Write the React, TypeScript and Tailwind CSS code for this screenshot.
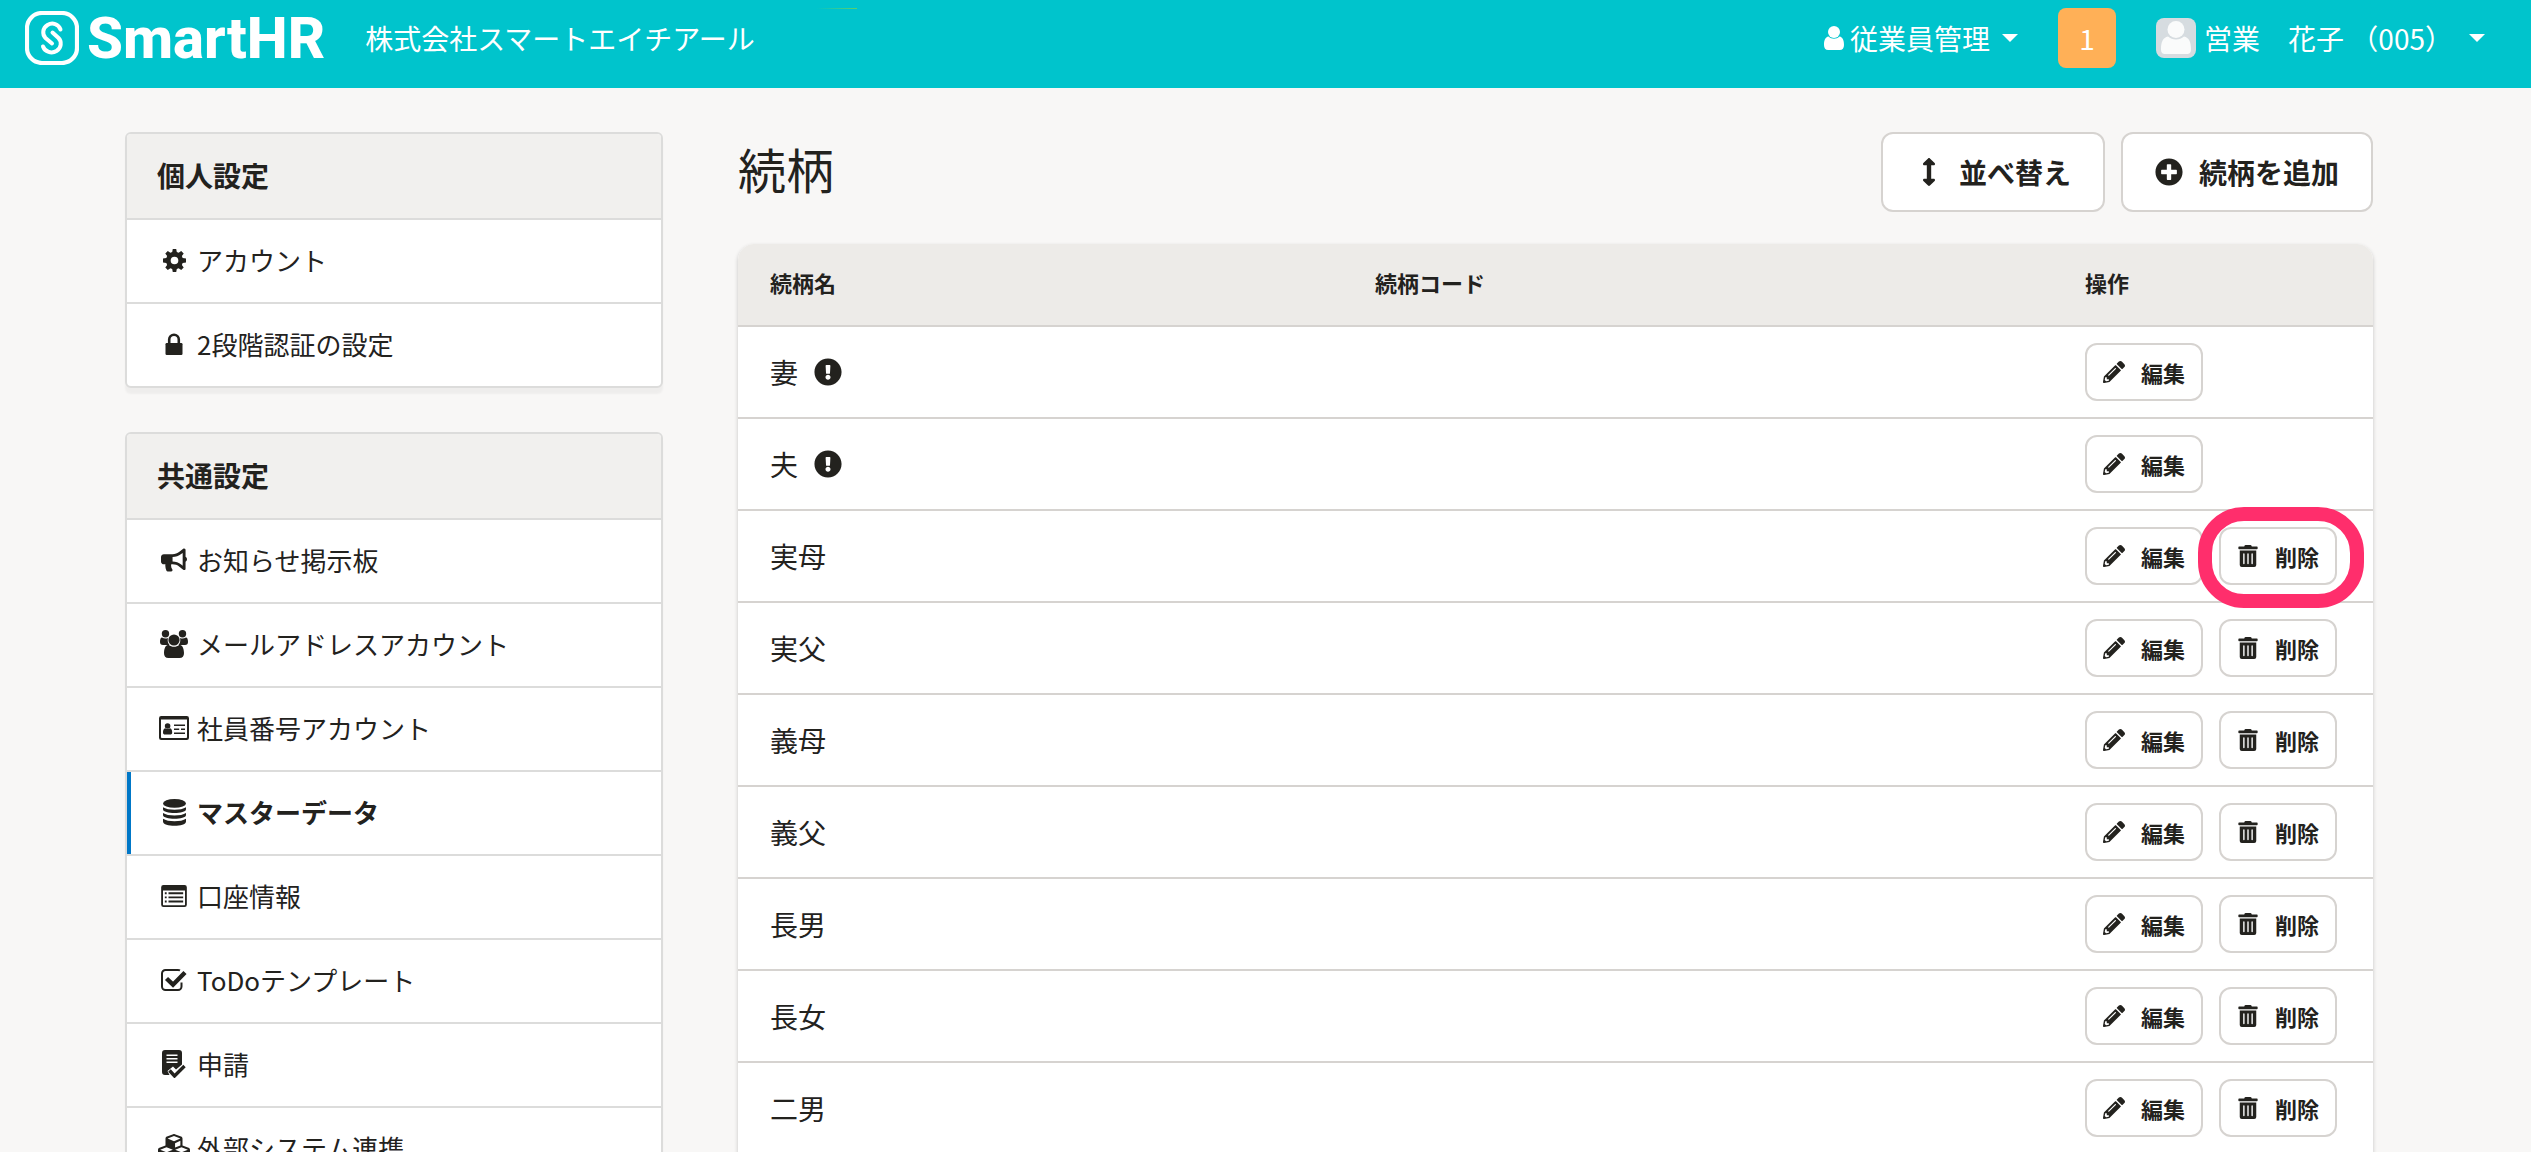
import React from "react";
import {
  FaArrowsAltV,
  FaBullhorn,
  FaCubes,
  FaExclamationCircle,
  FaPencilAlt,
  FaPlusCircle,
  FaTrashAlt,
} from "react-icons/fa";

type IconProps = { className?: string };

const GearIcon = ({ className }: IconProps) => (
  <svg viewBox="0 0 24 24" className={className} fill="currentColor" aria-hidden="true">
    <path
      fillRule="evenodd"
      d="M10.2 0h3.600l.6 3.200 1.900.8 2.700-1.900 2.600 2.600-1.900 2.700.8 1.900 3.500.7v4l-3.500.7-.8 1.900 1.900 2.700-2.600 2.600-2.700-1.900-1.900.8-.6 3.200h-3.600l-.6-3.200-1.900-.8-2.700 1.900-2.600-2.600 1.900-2.700-.8-1.900L0 14v-4l3.500-.7.8-1.900-1.900-2.700L5 2.100 7.700 4l1.900-.8zM12 8a4 4 0 1 0 0 8 4 4 0 0 0 0-8z"
    />
  </svg>
);

const LockIcon = ({ className }: IconProps) => (
  <svg viewBox="0 0 18 22" className={className} fill="currentColor" aria-hidden="true">
    <rect x="0.500" y="10" width="17" height="12" rx="1.200" />
    <path d="M4.200 11V6.500a4.800 4.800 0 0 1 9.600 0V11" fill="none" stroke="currentColor" strokeWidth="2.600" />
  </svg>
);

const UsersIcon = ({ className }: IconProps) => (
  <svg viewBox="0 0 28 28" className={className} fill="currentColor" aria-hidden="true">
    <circle cx="5.500" cy="3.700" r="3.700" />
    <circle cx="22.500" cy="3.700" r="3.700" />
    <path d="M2 7.500c2 1.300 4.500 1.300 6 .5-.8 3 0 5.200 1.500 7H3c-2 0-3-1-3-3 0-2.500.7-4.500 2-4.500zM26 7.500c-2 1.300-4.500 1.300-6 .5.8 3 0 5.200-1.500 7H25c2 0 3-1 3-3 0-2.500-.7-4.500-2-4.500z" />
    <circle cx="14" cy="10" r="5.600" />
    <path d="M8.700 14.800c-3 .3-4.500 3-4.700 8.200C3.900 26 5.500 28 8.500 28h11c3 0 4.600-2 4.500-5-.2-5.200-1.700-7.900-4.700-8.200-3 2.700-7.600 2.700-10.600 0z" />
  </svg>
);

const IdCardIcon = ({ className }: IconProps) => (
  <svg viewBox="0 0 30 24" className={className} fill="currentColor" aria-hidden="true">
    <path
      fillRule="evenodd"
      d="M2.200 0h25.600A2.200 2.200 0 0 1 30 2.200v19.600a2.200 2.200 0 0 1-2.200 2.200H2.200A2.200 2.200 0 0 1 0 21.800V2.200A2.200 2.200 0 0 1 2.200 0zM2 3.600v17.600a.8.8 0 0 0 .8.8h24.400a.8.8 0 0 0 .8-.8V3.600z"
    />
    <circle cx="8.600" cy="10" r="2.800" />
    <path d="M6.200 12.200C4.600 12.600 4 14.500 4 16.500 4 18 4.800 18.600 6 18.600h5.200c1.200 0 2-.6 2-2.100 0-2-.6-3.900-2.200-4.300-1.400 1-3.400 1-4.800 0z" />
    <path d="M15 8.400h11v1.700H15zM15 12.400h5.200v1.700H15zM22 12.400h4v1.700h-4zM15 16.400h11v1.700H15z" />
  </svg>
);

const DatabaseIcon = ({ className }: IconProps) => (
  <svg viewBox="0 0 24 28" className={className} fill="currentColor" aria-hidden="true">
    <ellipse cx="12" cy="4.500" rx="12" ry="4.500" />
    <path d="M0 8.500c5 3.500 19 3.500 24 0v2c0 5.200-24 5.200-24 0zM0 14.500c5 3.500 19 3.500 24 0v2c0 5.200-24 5.200-24 0zM0 20.500c5 3.500 19 3.500 24 0v2.800c0 6-24 6-24 0z" />
  </svg>
);

const ListIcon = ({ className }: IconProps) => (
  <svg viewBox="0 0 28 24" className={className} fill="currentColor" aria-hidden="true">
    <path
      fillRule="evenodd"
      d="M2.500 0h23A2.500 2.500 0 0 1 28 2.500v19a2.500 2.500 0 0 1-2.500 2.500h-23A2.500 2.500 0 0 1 0 21.500v-19A2.500 2.500 0 0 1 2.500 0zM2 6v15.500c0 .3.200.5.500.5h23c.3 0 .5-.2.500-.5V6z"
    />
    <path d="M4 8h2v2H4zM8 8h16v2H8zM4 12.500h2v2H4zM8 12.500h16v2H8zM4 17h2v2H4zM8 17h16v2H8z" />
  </svg>
);

const CheckBoxIcon = ({ className }: IconProps) => (
  <svg viewBox="0 0 26 22" className={className} fill="none" stroke="currentColor" aria-hidden="true">
    <path d="M20.500 13.500v4a3.500 3.500 0 0 1-3.500 3.500H4.500A3.500 3.500 0 0 1 1 17.500v-13A3.500 3.500 0 0 1 4.500 1H17c.8 0 1.400.1 2 .4" strokeWidth="2" />
    <path d="M5.500 9.500l6.500 6.200L24 3.500" strokeWidth="4.400" />
  </svg>
);

const DocCheckIcon = ({ className }: IconProps) => (
  <svg viewBox="0 0 24 28" className={className} fill="currentColor" aria-hidden="true">
    <path
      fillRule="evenodd"
      d="M3 0h14a3 3 0 0 1 3 3v11.500l-6 5-3-3L5.500 21l2 4H3a3 3 0 0 1-3-3V3a3 3 0 0 1 3-3zM4.500 4.500V6h11V4.500zM4.500 8v1.500h11V8zM4.500 11.500V13h11v-1.500z"
    />
    <path d="M7.500 20.500l5 5.500L22.500 16" fill="none" stroke="currentColor" strokeWidth="3.400" />
  </svg>
);

const PersonIcon = ({ className }: IconProps) => (
  <svg viewBox="0 0 20 24" className={className} fill="currentColor" aria-hidden="true">
    <circle cx="10" cy="6" r="6" />
    <path d="M4.500 10.500C1.200 11 0 14.500 0 19c0 3 1.500 5 4.200 5h11.600c2.700 0 4.200-2 4.200-5 0-4.500-1.200-8-4.500-8.500-3.100 3-7.900 3-11 0z" />
  </svg>
);

const Caret = () => (
  <svg viewBox="0 0 16 8" className="h-2 w-4" fill="currentColor" aria-hidden="true">
    <path d="M0 0h16L8 8z" />
  </svg>
);

const LogoMark = () => (
  <svg viewBox="0 0 54 54" className="size-[54px]" fill="none" stroke="currentColor" strokeLinecap="round" aria-hidden="true">
    <rect x="2" y="2" width="50" height="50" rx="15" strokeWidth="4.200" />
    <path d="M35.500 18.500C33.500 13 27.500 11 22.500 14S17 23.500 20.500 27L27 32.500" strokeWidth="4" />
    <path d="M18 35.500C20 41 26.500 43 31.500 40S37 30.500 33.500 27L27.500 21.500" strokeWidth="4" />
  </svg>
);

const Avatar = () => (
  <svg viewBox="0 0 40 40" className="size-10 rounded-lg" aria-hidden="true">
    <rect width="40" height="40" fill="#d6dce0" />
    <circle cx="20" cy="11.500" r="8.500" fill="#fafbfb" />
    <path d="M12 18.500C7 19.500 5 24 5 31c0 4 1.500 5 4.500 5h21c3 0 4.500-1 4.500-5 0-7-2-11.500-7-12.500-4.500 4-11.500 4-16 0z" fill="#fafbfb" />
  </svg>
);

type NavItem = { label: string; icon: React.ReactNode; active?: boolean };

const personal: NavItem[] = [
  { label: "アカウント", icon: <GearIcon className="size-[23px]" /> },
  { label: "2段階認証の設定", icon: <LockIcon className="h-[22px] w-[18px]" /> },
];

const common: NavItem[] = [
  { label: "お知らせ掲示板", icon: <FaBullhorn className="size-[26px]" /> },
  { label: "メールアドレスアカウント", icon: <UsersIcon className="size-7" /> },
  { label: "社員番号アカウント", icon: <IdCardIcon className="h-6 w-[30px]" /> },
  { label: "マスターデータ", icon: <DatabaseIcon className="h-[27px] w-[23px]" />, active: true },
  { label: "口座情報", icon: <ListIcon className="h-[22px] w-[26px]" /> },
  { label: "ToDoテンプレート", icon: <CheckBoxIcon className="h-[22px] w-[26px]" /> },
  { label: "申請", icon: <DocCheckIcon className="h-7 w-6" /> },
  { label: "外部システム連携", icon: <FaCubes className="size-8 shrink-0" /> },
];

function NavPanel({ title, items }: { title: string; items: NavItem[] }) {
  return (
    <nav aria-label={title} className="overflow-hidden rounded-md border-2 border-[#dcdcdb] bg-white shadow-[0_6px_2px_rgba(0,0,0,0.04)]">
      <h2 className="bg-[#f1f0ee] px-[30px] pt-5 pb-[22px] text-[28px] leading-[42px] font-bold">{title}</h2>
      <ul>
        {items.map((item) => (
          <li key={item.label} className="border-t-2 border-[#dcdcdb]">
            <a
              href="#"
              aria-current={item.active ? "page" : undefined}
              className={
                item.active
                  ? "flex items-center gap-2 border-l-4 border-[#0077c7] pt-5 pr-8 pb-[22px] pl-7 text-[26px] leading-10 font-bold"
                  : "flex items-center gap-2 px-8 pt-5 pb-[22px] text-[26px] leading-10"
              }
            >
              <span className="flex w-[30px] shrink-0 justify-center">{item.icon}</span>
              {item.label}
            </a>
          </li>
        ))}
      </ul>
    </nav>
  );
}

const smallButton =
  "flex items-center gap-4 rounded-xl border-2 border-[#d6d3d0] bg-white px-4 py-4 text-[22px] leading-[22px] font-bold whitespace-nowrap";
const largeButton =
  "flex items-center gap-4 rounded-xl border-2 border-[#d6d3d0] bg-white px-8 py-6 text-[28px] leading-7 font-bold whitespace-nowrap";

const relations = [
  { name: "妻", fixed: true },
  { name: "夫", fixed: true },
  { name: "実母", highlighted: true },
  { name: "実父" },
  { name: "義母" },
  { name: "義父" },
  { name: "長男" },
  { name: "長女" },
  { name: "二男" },
];

export default function App() {
  return (
    <div className="h-screen overflow-hidden bg-[#f8f7f6] font-['Noto_Sans_CJK_JP',sans-serif] text-[#23221e]">
      <header className="relative flex items-center justify-between bg-[#00c4cc] pt-2 pr-[46px] pb-5 pl-[25px] text-[28px] leading-10 text-white">
        <span className="absolute top-2 left-[817px] h-px w-10 bg-linear-to-r from-transparent to-[#5fd068]" />
        <div className="flex items-center gap-10">
          <a href="#" aria-label="SmartHR" className="flex items-center gap-2">
            <LogoMark />
            <span className="font-['Roboto',sans-serif] text-[58px] leading-[60px] font-extrabold">SmartHR</span>
          </a>
          <span>株式会社スマートエイチアール</span>
        </div>
        <div className="flex items-center gap-10">
          <button type="button" className="flex items-center gap-3">
            <span className="flex items-center gap-[6px]">
              <PersonIcon className="h-6 w-5" />
              従業員管理
            </span>
            <Caret />
          </button>
          <button type="button" className="h-[60px] w-[58px] rounded-lg bg-[#ffb057]">1</button>
          <button type="button" className="flex items-center gap-4">
            <span className="flex items-center gap-2">
              <Avatar />
              営業　花子 （005）
            </span>
            <Caret />
          </button>
        </div>
      </header>

      <div className="flex gap-[75px] pt-11 pr-[158px] pl-[125px]">
        <aside className="flex w-[538px] shrink-0 flex-col gap-11">
          <NavPanel title="個人設定" items={personal} />
          <NavPanel title="共通設定" items={common} />
        </aside>

        <main className="min-w-0 flex-1">
          <div className="mb-8 flex items-start justify-between">
            <h1 className="text-[48px] leading-[72px]">続柄</h1>
            <div className="flex gap-4">
              <button type="button" className={largeButton}>
                <FaArrowsAltV className="size-7" />
                並べ替え
              </button>
              <button type="button" className={largeButton}>
                <FaPlusCircle className="size-7" />
                続柄を追加
              </button>
            </div>
          </div>

          <div className="overflow-hidden rounded-t-2xl bg-white shadow-[0_2px_4px_rgba(0,0,0,0.2)]">
            <table className="w-full table-fixed border-collapse text-left">
              <thead className="bg-[#edebe8] text-[22px] leading-8">
                <tr>
                  <th scope="col" className="w-[37%] px-8 pt-[22px] pb-[27px]">続柄名</th>
                  <th scope="col" className="px-8 pt-[22px] pb-[27px]">続柄コード</th>
                  <th scope="col" className="w-[320px] px-8 pt-[22px] pb-[27px]">操作</th>
                </tr>
              </thead>
              <tbody>
                {relations.map((r) => (
                  <tr key={r.name} className="border-t-2 border-[#d6d3d0]">
                    <td className="px-8 text-[28px] leading-10">
                      <span className="flex items-center gap-4">
                        {r.name}
                        {r.fixed && <FaExclamationCircle className="size-7" />}
                      </span>
                    </td>
                    <td />
                    <td className="px-8 py-4">
                      <div className="flex gap-4">
                        <button type="button" className={smallButton}>
                          <FaPencilAlt />
                          編集
                        </button>
                        {!r.fixed && (
                          <div className="relative">
                            <button type="button" className={smallButton}>
                              <FaTrashAlt />
                              削除
                            </button>
                            {r.highlighted && (
                              <span className="pointer-events-none absolute -top-5 -right-[27px] -bottom-[23px] -left-[21px] rounded-[46px] border-[14px] border-[#ff2e6c]" />
                            )}
                          </div>
                        )}
                      </div>
                    </td>
                  </tr>
                ))}
              </tbody>
            </table>
          </div>
        </main>
      </div>
    </div>
  );
}
